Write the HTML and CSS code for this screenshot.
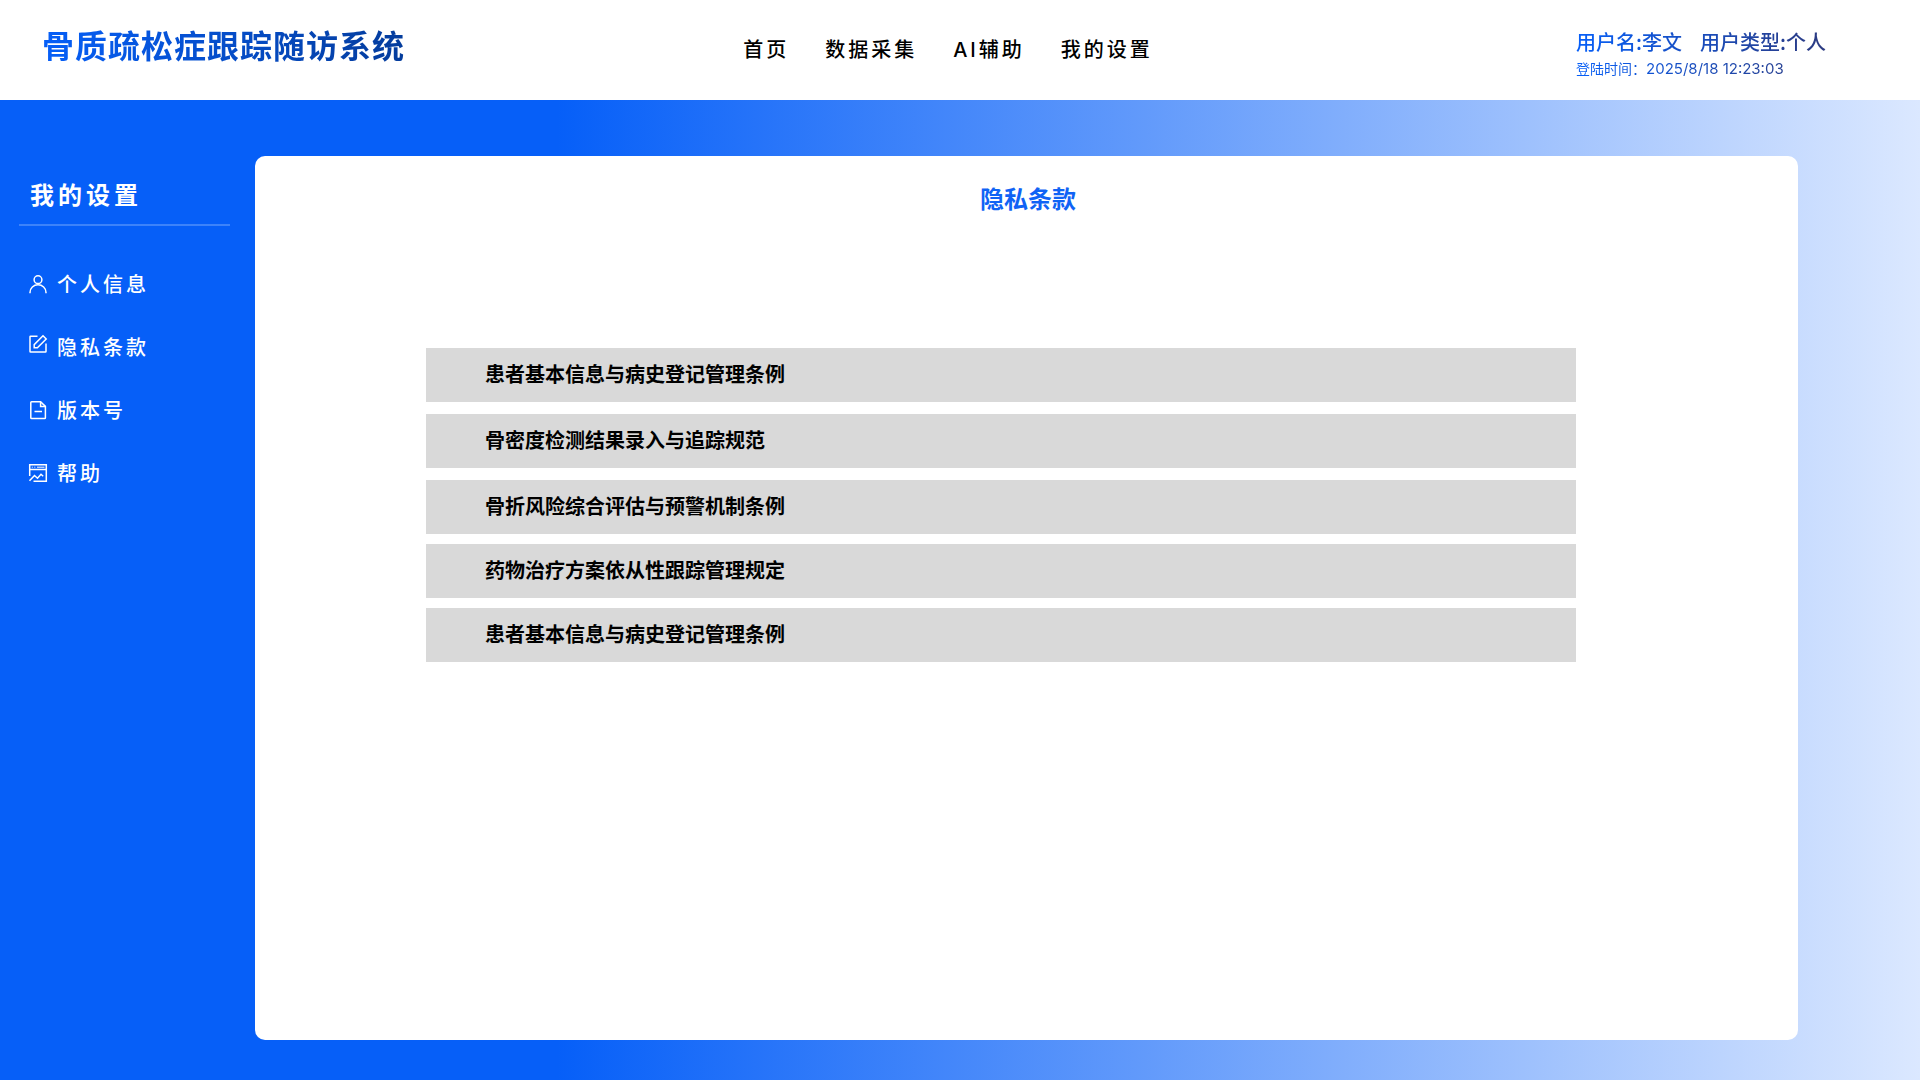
FILE: index.html
```html
<!DOCTYPE html>
<html lang="zh-CN">
<head>
<meta charset="utf-8">
<title>骨质疏松症跟踪随访系统 - 隐私条款</title>
<link rel="stylesheet" href="styles.css">
</head>
<body>
<header class="topbar">
  <h1 class="brand">骨质疏松症跟踪随访系统</h1>
  <nav class="topnav">
    <a href="#home">首页</a>
    <a href="#data">数据采集</a>
    <a href="#ai">AI辅助</a>
    <a href="#settings">我的设置</a>
  </nav>
  <div class="account">
    <p class="account-user"><span>用户名:李文</span><span>用户类型:个人</span></p>
    <p class="account-login">登陆时间：<time datetime="2025-08-18T12:23:03">2025/8/18 12:23:03</time></p>
  </div>
</header>
<div class="workspace">
  <aside class="sidebar">
    <h2 class="sidebar-title">我的设置</h2>
    <nav class="menu">
      <a href="#profile">
        <svg class="icon" viewBox="0 0 20 20"><circle cx="10" cy="5.7" r="3.9"/><path d="M2 19.2v-.8a8 7.6 0 0 1 16 0v.8"/></svg>
        个人信息</a>
      <a href="#privacy">
        <svg class="icon icon-raised" viewBox="0 0 20 20"><path d="M9.5 2.2H2.6Q2 2.2 2 2.8v14.6q0 .6.6.6h14.8q.6 0 .6-.6V9.500"/><path d="M15 1.800 18.200 5 9.400 13.800H6.200v-3.200z"/></svg>
        隐私条款</a>
      <a href="#version">
        <svg class="icon" viewBox="0 0 20 20"><path d="M12.600 1.800H3.600q-.8 0-.8.8v15.200q0 .8.8.8h13q.8 0 .8-.8V6.400z"/><path d="M12.600 1.800v4.600h4.600M6.500 11.500h7.500"/></svg>
        版本号</a>
      <a href="#help">
        <svg class="icon" viewBox="0 0 20 20"><path d="M1.700 13V1.800h16.600v16.400H5.500M1.700 6.500h16.600"/><path d="M3.800 4.200h1M6.300 4.200h1M9 4.200h7.500" stroke-width="1"/><path d="m1.500 17.800 5-5.300 3 2.700 3.500-3.900 2.200 2"/></svg>
        帮助</a>
    </nav>
  </aside>
  <main class="panel">
    <h2 class="panel-title">隐私条款</h2>
    <ul class="terms">
      <li><a href="#t1">患者基本信息与病史登记管理条例</a></li>
      <li><a href="#t2">骨密度检测结果录入与追踪规范</a></li>
      <li><a href="#t3">骨折风险综合评估与预警机制条例</a></li>
      <li><a href="#t4">药物治疗方案依从性跟踪管理规定</a></li>
      <li><a href="#t5">患者基本信息与病史登记管理条例</a></li>
    </ul>
  </main>
</div>
</body>
</html>
```
FILE: styles.css
```css
* { box-sizing: border-box; }

body {
  display: flex;
  flex-direction: column;
  min-height: 100vh;
  margin: 0;
  color: #000;
  font-family: "Noto Sans CJK SC", sans-serif;
  font-size: 20px;
  line-height: 30px;
}

h1, h2, p, ul { margin: 0; padding: 0; }
ul { list-style: none; }
a { color: inherit; text-decoration: none; }

/* Top bar */
.topbar {
  display: grid;
  grid-template-columns: 1fr auto 1fr;
  height: 100px;
  padding: 0 66px 0 42px;
  background: #fff;
}

.brand,
.account-user,
.account-login {
  width: max-content;
  background: linear-gradient(90deg, #065ff8, #043c9c);
  background-clip: text;
  -webkit-background-clip: text;
  color: transparent;
}

.brand {
  padding-top: 20px;
  font-size: 32px;
  font-weight: 700;
  line-height: 48px;
  letter-spacing: 1px;
}

.topnav {
  display: flex;
  align-items: center;
  gap: 36px;
  font-family: Inter, "Noto Sans CJK SC", sans-serif;
  font-weight: 500;
  letter-spacing: 3px;
}

.account {
  justify-self: end;
  padding: 27px 28px 0 0;
}

.account-user,
.account-login {
  background-image: linear-gradient(90deg, #065ff8, #2c3a80);
}

.account-user {
  display: flex;
  gap: 18px;
  font-weight: 500;
}

.account-login {
  padding-right: 40px;
  font-size: 14px;
  line-height: 22px;
}

.account-login time {
  font-family: Inter, sans-serif;
  font-size: 15px;
}

/* Body area */
.workspace {
  display: grid;
  flex: 1;
  grid-template-columns: 255px 1fr;
  padding: 56px 122px 40px 0;
  background: linear-gradient(90deg, #065ff8 29%, #dbe8ff);
}

.sidebar {
  padding: 20px 25px 0 19px;
  color: #fff;
}

.sidebar-title {
  padding: 0 11px 12px;
  border-bottom: 2px solid #3d83fa;
  font-size: 24px;
  font-weight: 700;
  line-height: 36px;
  letter-spacing: 4px;
}

.menu {
  display: flex;
  flex-direction: column;
  gap: 33px;
  padding: 43px 9px 0;
  font-weight: 500;
  letter-spacing: 3px;
}

.menu a {
  display: flex;
  align-items: center;
  gap: 9px;
}

.icon {
  width: 20px;
  height: 20px;
  fill: none;
  stroke: currentColor;
  stroke-width: 1.5;
}

.icon-raised { margin-bottom: 6px; }

.panel {
  padding: 25px 222px 40px 171px;
  border-radius: 10px;
  background: #fff;
}

.panel-title {
  padding-left: 54px;
  color: #1063f5;
  font-size: 24px;
  font-weight: 700;
  line-height: 34px;
  text-align: center;
}

.terms { padding-top: 133px; }
.terms li { margin-bottom: 12px; }
.terms li:nth-child(n+3) { margin-bottom: 10px; }

.terms a {
  display: block;
  padding: 11px 59px 13px;
  background: #d9d9d9;
  font-weight: 700;
}
```
